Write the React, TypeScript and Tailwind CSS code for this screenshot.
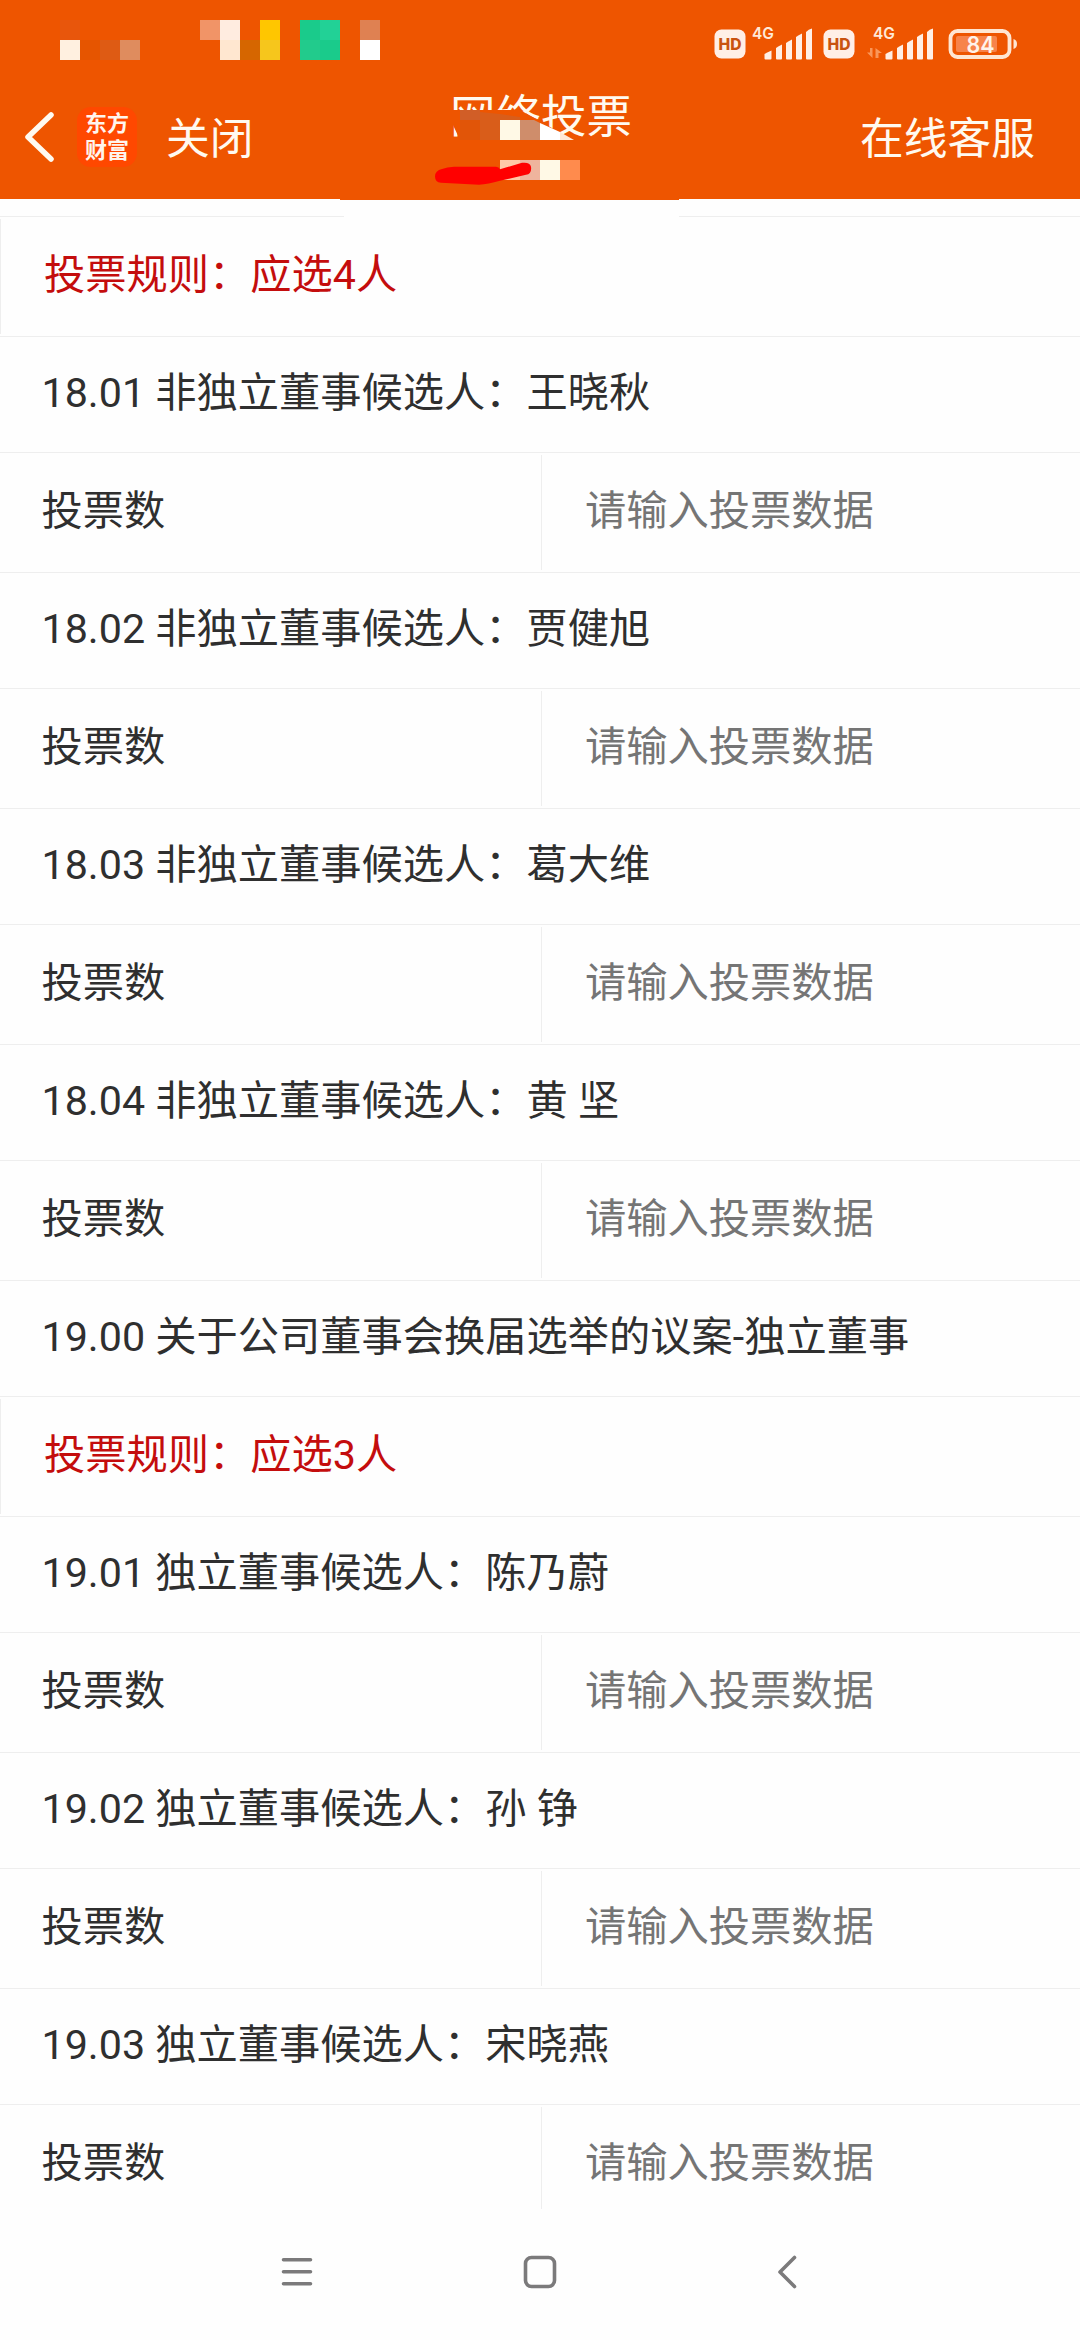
import { Fragment } from "react";

type Row =
  | { kind: "rule"; text: string }
  | { kind: "title"; text: string }
  | { kind: "vote"; text: string };

const rows: Row[] = [
  { kind: "rule", text: "投票规则：应选4人" },
  { kind: "vote", text: "18.01 非独立董事候选人：王晓秋" },
  { kind: "vote", text: "18.02 非独立董事候选人：贾健旭" },
  { kind: "vote", text: "18.03 非独立董事候选人：葛大维" },
  { kind: "vote", text: "18.04 非独立董事候选人：黄 坚" },
  { kind: "title", text: "19.00 关于公司董事会换届选举的议案-独立董事" },
  { kind: "rule", text: "投票规则：应选3人" },
  { kind: "vote", text: "19.01 独立董事候选人：陈乃蔚" },
  { kind: "vote", text: "19.02 独立董事候选人：孙 铮" },
  { kind: "vote", text: "19.03 独立董事候选人：宋晓燕" },
];

function HdBadge() {
  return (
    <svg className="h-[30px] w-[32px]" viewBox="0 0 32 30">
      <rect x="0.5" y="0.5" width="31" height="29" rx="7" fill="#ffefe6" />
      <text
        x="16"
        y="21"
        textAnchor="middle"
        textLength="23"
        lengthAdjust="spacingAndGlyphs"
        fontFamily="Inter, sans-serif"
        fontWeight="800"
        fontSize="16"
        fill="#c9530f"
      >
        HD
      </text>
    </svg>
  );
}

function Signal({ arrows = false }: { arrows?: boolean }) {
  return (
    <svg className="h-[44px] w-[68px]" viewBox="0 -8 68 44">
      <text
        x="7"
        y="14"
        fontFamily="Inter, sans-serif"
        fontWeight="600"
        fontSize="16.500"
        textLength="22"
        lengthAdjust="spacingAndGlyphs"
        fill="#ffe9d8"
      >
        4G
      </text>
      {arrows && (
        <g fill="#f99659">
          <path d="M4 23h2.500v10L1 27.500h3z" />
          <path d="M9.500 33V23l6.500 5h-3.500v5z" />
        </g>
      )}
      <g fill="#ffefe6">
        <path d="M19.500 29q3-2 7-3.500v8q0 1-1 1h-5q-1 0-1-1z" />
        <path d="M31 23q2.500-2 6-3.500v14q0 1-1 1h-4q-1 0-1-1z" />
        <path d="M41 18q2.500-2 6-3.500v19q0 1-1 1h-4q-1 0-1-1z" />
        <path d="M51 12q2.500-2 6-3.500v25q0 1-1 1h-4q-1 0-1-1z" />
        <path d="M61 7q2.500-3 6-3.500v30q0 1-1 1h-4q-1 0-1-1z" />
      </g>
    </svg>
  );
}

function Battery() {
  return (
    <svg className="h-[30px] w-[70px]" viewBox="0 0 70 30">
      <rect x="2.500" y="2" width="59" height="26" rx="7" fill="none" stroke="#ffe6d2" strokeWidth="3.800" />
      <rect x="8" y="7" width="41" height="16" rx="2" fill="#f7834a" />
      <path d="M65.500 10q3.500 1 3.500 5t-3.500 5z" fill="#ffe6d2" />
      <text
        x="32.500"
        y="23.500"
        textAnchor="middle"
        textLength="28"
        lengthAdjust="spacingAndGlyphs"
        fontFamily="Inter, sans-serif"
        fontWeight="600"
        fontSize="22.500"
        fill="#fff3ea"
      >
        84
      </text>
    </svg>
  );
}

// Pixelated notification icons on the left of the status bar
function Mosaic() {
  return (
    <svg className="h-[40px] w-[320px]" viewBox="60 20 320 40" shapeRendering="crispEdges">
      <rect x="60" y="20" width="20" height="20" fill="#e8560c" />
      <rect x="60" y="40" width="20" height="20" fill="#fff0e0" />
      <rect x="80" y="40" width="20" height="20" fill="#e65500" />
      <rect x="100" y="40" width="20" height="20" fill="#de5b14" />
      <rect x="120" y="40" width="20" height="20" fill="#df8c5e" />
      <rect x="200" y="20" width="20" height="20" fill="#f19467" />
      <rect x="220" y="20" width="20" height="20" fill="#ffece0" />
      <rect x="220" y="40" width="20" height="20" fill="#ffe7d0" />
      <rect x="240" y="40" width="20" height="20" fill="#d66600" />
      <rect x="260" y="20" width="20" height="20" fill="#ffc600" />
      <rect x="260" y="40" width="20" height="20" fill="#f6c61c" />
      <rect x="300" y="20" width="20" height="20" fill="#1acb8b" />
      <rect x="320" y="20" width="20" height="20" fill="#22d196" />
      <rect x="300" y="40" width="20" height="20" fill="#22cb8c" />
      <rect x="320" y="40" width="20" height="20" fill="#1acb8b" />
      <rect x="360" y="20" width="20" height="20" fill="#df8152" />
      <rect x="360" y="40" width="20" height="20" fill="#ffffff" />
    </svg>
  );
}

function Scribble() {
  return (
    <svg className="h-[80px] w-[150px]" viewBox="435 108 150 80">
      <path d="M453 110H520L573 140H460L453 125z" fill="#ee5500" />
      <rect x="460" y="110" width="20" height="10" fill="#d15e27" />
      <path d="M460 120h20v20h-20z" fill="#e15508" />
      <path d="M480 112l20 2 20 3v23h-40z" fill="#d95d1a" />
      <rect x="500" y="120" width="20" height="20" fill="#fff9e6" />
      <path d="M520 120h14l6 3v17h-20z" fill="#cf8d6b" />
      <path d="M540 123l20 9v8h-20z" fill="#ffffff" />
      <path d="M560 132l14 8h-14z" fill="#ffe7d6" />
      <rect x="500" y="160" width="20" height="20" fill="#ffc9a8" />
      <rect x="520" y="160" width="20" height="20" fill="#efb49d" />
      <rect x="540" y="160" width="20" height="20" fill="#fff9e6" />
      <rect x="560" y="160" width="20" height="20" fill="#ff8b4d" />
      <path
        d="M435 176.500q0-6 7-7.500 5-2 12-2.200h42q3 0 4 2.500l22-6.500q8-1 9 4 1 7-5 8l-26 6q-12 3.500-21 4l-38-2q-6-.5-6-6.300z"
        fill="#ff0000"
      />
    </svg>
  );
}

function Header() {
  return (
    <header className="h-[199px] bg-[#ee5500] text-[43.750px] leading-[60px] text-[#fffaf0]">
      <div className="flex h-[80px] items-start justify-between pr-[62px] pl-[60px]">
        <div className="pt-[20px]">
          <Mosaic />
        </div>
        <div className="flex items-start pt-[29px]">
          <HdBadge />
          <div className="-mt-[12px] -ml-[1px]">
            <Signal />
          </div>
          <div className="ml-[10px]">
            <HdBadge />
          </div>
          <div className="-mt-[12px] ml-[11px]">
            <Signal arrows />
          </div>
          <div className="ml-[14px]">
            <Battery />
          </div>
        </div>
      </div>
      <div className="grid h-[119px] grid-cols-3">
        <div className="flex items-start">
          <svg className="mt-[30px] ml-[22px] h-[54px] w-[34px]" viewBox="0 0 34 54">
            <path d="M29 5L6 27l23 22" fill="none" stroke="#fffaf0" strokeWidth="5.500" strokeLinecap="round" strokeLinejoin="round" />
          </svg>
          <div className="mt-[27px] ml-[21px] flex h-[60px] w-[60px] flex-col items-center rounded-[14px] bg-[#ff4800] pt-[3px] text-[22px] leading-[27px] font-bold text-[#fff5ee]">
            <span>东方</span>
            <span>财富</span>
          </div>
          <span className="mt-[29px] ml-[29px]">关闭</span>
        </div>
        <div className="relative flex justify-center">
          <h1 className="mt-[8px] h-[60px] pl-[2px] text-[45.500px]">网络投票</h1>
          <div className="absolute top-[28px] left-[75px]">
            <Scribble />
          </div>
        </div>
        <span className="mt-[29px] mr-[45px] text-right">在线客服</span>
      </div>
    </header>
  );
}

function RuleRow({ text }: { text: string }) {
  return (
    <div className="h-[120px] border-b border-[#eeeeee] py-[2px]">
      <div className="flex h-[115px] items-center border-l border-[#eeeeee] pb-[4px] pl-[43px] text-[#c40d0d]">
        {text}
      </div>
    </div>
  );
}

function TitleRow({ text }: { text: string }) {
  return (
    <div className="flex h-[116px] items-center border-b border-[#eeeeee] pb-[4px] pl-[41.5px]">
      {text}
    </div>
  );
}

function VoteRow() {
  return (
    <div className="flex h-[120px] items-stretch border-b border-[#eeeeee] py-[2px]">
      <span className="flex w-[541px] items-center pb-[4px] pl-[41.5px]">投票数</span>
      <span className="flex flex-1 items-center border-l border-[#eeeeee] pb-[4px] pl-[43px] text-[#757575]">
        请输入投票数据
      </span>
    </div>
  );
}

function NavBar() {
  return (
    <nav className="h-[131px]">
      <svg className="h-[131px] w-full" viewBox="0 2209 1080 131" fill="none" stroke="#7b7a7b" strokeWidth="3.600" strokeLinecap="round" strokeLinejoin="round">
        <path d="M283.500 2259.700h27M283.500 2271.700h27M283.500 2283.700h27" />
        <rect x="525.500" y="2257.500" width="29" height="29" rx="6" />
        <path d="M794.500 2257.500L780 2272l14.500 14.500" />
      </svg>
    </nav>
  );
}

function App() {
  return (
    <div className="flex h-[2340px] w-[1080px] flex-col overflow-hidden bg-[#fefefe] font-['Roboto','Noto_Sans_CJK_SC',sans-serif]">
      <Header />
      <main className="h-[2010px] overflow-hidden text-[41.250px] leading-[60px] whitespace-nowrap text-[#2f2f2f]">
        {/* bottom edge of the row scrolled under the header */}
        <div className="flex h-[18px] items-end justify-between">
          <div className="h-px w-[346px] bg-[#eeeeee]" />
          <div className="h-full flex-1">
            <div className="-ml-[4px] h-px w-[339px] bg-[#ee5500]" />
          </div>
          <div className="h-px w-[403px] bg-[#eeeeee]" />
        </div>
        {rows.map((row) => {
          if (row.kind === "rule") return <RuleRow key={row.text} text={row.text} />;
          if (row.kind === "title") return <TitleRow key={row.text} text={row.text} />;
          return (
            <Fragment key={row.text}>
              <TitleRow text={row.text} />
              <VoteRow />
            </Fragment>
          );
        })}
      </main>
      <NavBar />
    </div>
  );
}

export default App;
